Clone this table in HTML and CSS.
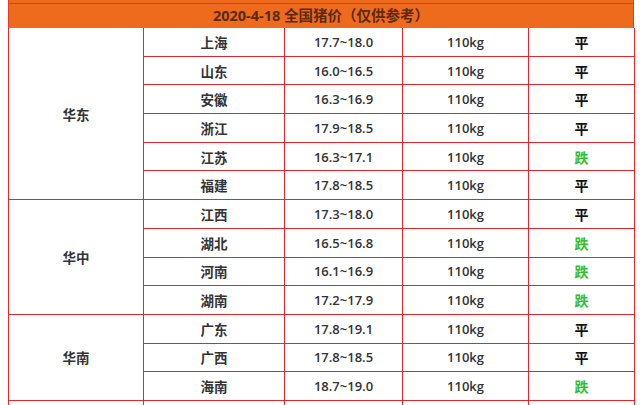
FILE: index.html
```html
<!DOCTYPE html>
<html lang="zh">
<head>
<meta charset="utf-8">
<link rel="stylesheet" href="styles.css">
</head>
<body>
<div class="sheet">
  <div class="strip"></div>
  <div class="title">2020-4-18 全国猪价（仅供参考）</div>
  <table class="grid">
    <colgroup>
      <col class="c1"><col class="c2"><col class="c3"><col class="c4"><col class="c5">
    </colgroup>
    <tbody>
      <tr><td class="region" rowspan="6">华东</td><td>上海</td><td class="num">17.7~18.0</td><td class="num">110kg</td><td class="flat">平</td></tr>
      <tr><td>山东</td><td class="num">16.0~16.5</td><td class="num">110kg</td><td class="flat">平</td></tr>
      <tr><td>安徽</td><td class="num">16.3~16.9</td><td class="num">110kg</td><td class="flat">平</td></tr>
      <tr><td>浙江</td><td class="num">17.9~18.5</td><td class="num">110kg</td><td class="flat">平</td></tr>
      <tr><td>江苏</td><td class="num">16.3~17.1</td><td class="num">110kg</td><td class="down">跌</td></tr>
      <tr><td>福建</td><td class="num">17.8~18.5</td><td class="num">110kg</td><td class="flat">平</td></tr>
      <tr><td class="region" rowspan="4">华中</td><td>江西</td><td class="num">17.3~18.0</td><td class="num">110kg</td><td class="flat">平</td></tr>
      <tr><td>湖北</td><td class="num">16.5~16.8</td><td class="num">110kg</td><td class="down">跌</td></tr>
      <tr><td>河南</td><td class="num">16.1~16.9</td><td class="num">110kg</td><td class="down">跌</td></tr>
      <tr><td>湖南</td><td class="num">17.2~17.9</td><td class="num">110kg</td><td class="down">跌</td></tr>
      <tr><td class="region" rowspan="3">华南</td><td>广东</td><td class="num">17.8~19.1</td><td class="num">110kg</td><td class="flat">平</td></tr>
      <tr><td>广西</td><td class="num">17.8~18.5</td><td class="num">110kg</td><td class="flat">平</td></tr>
      <tr><td>海南</td><td class="num">18.7~19.0</td><td class="num">110kg</td><td class="down">跌</td></tr>
      <tr><td></td><td></td><td></td><td></td><td></td></tr>
    </tbody>
  </table>
</div>
</body>
</html>
```
FILE: styles.css
```css
html, body {
  margin: 0;
  padding: 0;
  background: #ffffff;
  overflow: hidden;
}
body {
  font-family: "Open Sans", "Noto Sans CJK SC", sans-serif;
  color: #333333;
}
.sheet {
  margin-left: 8px;
  width: 626px;
}
.strip {
  height: 3px;
  background: #ee6a1c;
  border-bottom: 1px solid #d2470f;
  border-left: 1px solid #e33a2a;
  border-right: 1px solid #e33a2a;
}
.title {
  height: 24px;
  line-height: 24px;
  background: #ee6a1c;
  text-align: center;
  font-weight: 700;
  font-size: 14.5px;
  color: #5a2a12;
  border-left: 1px solid #e33a2a;
  border-right: 1px solid #e33a2a;
}
.grid {
  border-collapse: collapse;
  table-layout: fixed;
  width: 626px;
}
.c1 { width: 135px; }
.c2 { width: 141px; }
.c3 { width: 118px; }
.c4 { width: 126px; }
.c5 { width: 106px; }
.grid td {
  border: 1px solid #e4262e;
  height: 27.7px;
  padding: 0;
  text-align: center;
  vertical-align: middle;
  font-size: 13.5px;
  font-weight: 700;
  color: #333333;
}
.grid tr:first-child td {
  border-top: none;
}
.grid td.num {
  font-size: 13px;
  font-weight: 600;
}
.grid td.flat {
  color: #111111;
  font-size: 14px;
}
.grid td.down {
  color: #2fbf2f;
  font-size: 14px;
}
.grid td.region {
  font-size: 13.5px;
}
```
